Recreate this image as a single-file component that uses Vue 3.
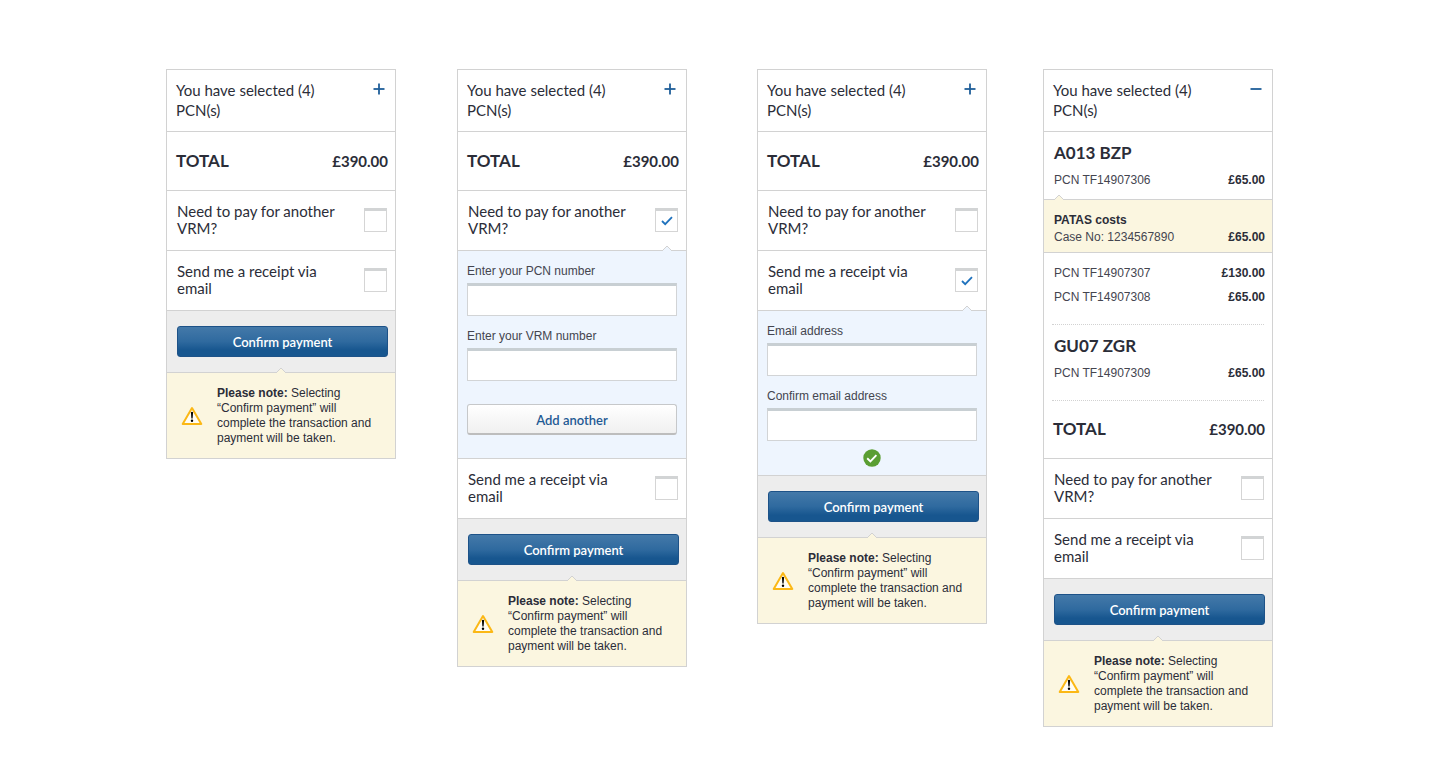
<template>
  <main class="page">
    <article class="card" v-for="card in cards" :key="card.id">
      <header class="summary">
        <h1 class="summary-title">You have selected (4) PCN(s)</h1>
        <button
          class="toggle"
          type="button"
          :aria-expanded="card.expanded"
          :aria-label="card.expanded ? 'Hide PCNs' : 'Show PCNs'"
          @click="card.expanded = !card.expanded"
        >
          <svg viewBox="0 0 12 12" width="12" height="12">
            <path d="M0.5 6H11.5" />
            <path d="M6 0.5V11.5" v-if="!card.expanded" />
          </svg>
        </button>
      </header>

      <div class="details" v-if="card.expanded">
        <section class="vehicle" v-for="vehicle in vehicles" :key="vehicle.vrm">
          <h2 class="vrm">{{ vehicle.vrm }}</h2>
          <table class="pcns">
            <tbody>
              <tr v-for="row in vehicle.rows" :key="row.ref" :class="{ patas: row.title }">
                <th scope="row">
                  <svg class="pointer pointer-left" viewBox="0 0 12 6" v-if="row.title">
                    <path d="M1 6L6 1L11 6" />
                  </svg>
                  <strong v-if="row.title">{{ row.title }}</strong>
                  {{ row.ref }}
                </th>
                <td>{{ row.amount }}</td>
              </tr>
            </tbody>
          </table>
          <hr class="divider" />
        </section>
      </div>

      <div class="total" :class="{ 'total-joined': card.expanded }">
        <span class="total-label">TOTAL</span>
        <span class="total-amount">£390.00</span>
      </div>

      <div class="option">
        <label :for="card.id + '-another'">Need to pay for another VRM?</label>
        <input :id="card.id + '-another'" class="check" type="checkbox" v-model="card.another" />
      </div>
      <form class="panel" v-if="card.another" @submit.prevent>
        <svg class="pointer pointer-right" viewBox="0 0 12 6"><path d="M1 6L6 1L11 6" /></svg>
        <label :for="card.id + '-pcn'">Enter your PCN number</label>
        <input :id="card.id + '-pcn'" class="field" type="text" />
        <label :for="card.id + '-vrm'">Enter your VRM number</label>
        <input :id="card.id + '-vrm'" class="field" type="text" />
        <button class="button button-light" type="button">Add another</button>
      </form>

      <div class="option">
        <label :for="card.id + '-receipt'">Send me a receipt via email</label>
        <input :id="card.id + '-receipt'" class="check" type="checkbox" v-model="card.receipt" />
      </div>
      <form class="panel panel-email" v-if="card.receipt" @submit.prevent>
        <svg class="pointer pointer-right" viewBox="0 0 12 6"><path d="M1 6L6 1L11 6" /></svg>
        <label :for="card.id + '-email'">Email address</label>
        <input :id="card.id + '-email'" class="field" type="email" />
        <label :for="card.id + '-email2'">Confirm email address</label>
        <input :id="card.id + '-email2'" class="field" type="email" />
        <svg class="valid" viewBox="0 0 18 18" width="18" height="18">
          <circle cx="9" cy="9" r="8.7" fill="#5a9e32" />
          <path d="M4.2 9.3L7.4 12.4L13.4 6.2" fill="none" stroke="#fff" stroke-width="1.9" />
        </svg>
      </form>

      <div class="action">
        <button class="button button-primary" type="button">Confirm payment</button>
      </div>

      <div class="note">
        <svg class="pointer pointer-center" viewBox="0 0 12 6"><path d="M1 6L6 1L11 6" /></svg>
        <svg class="warning" viewBox="0 0 22 20" width="22" height="20">
          <path class="warning-frame" d="M11 2L20.3 18H1.7Z" />
          <path d="M9.9 6.2Q11 5.4 12.1 6.2L11.6 12.6H10.4Z" />
          <circle cx="11" cy="14.8" r="1.2" />
        </svg>
        <p><strong>Please note:</strong> Selecting “Confirm payment” will complete the transaction and payment will be taken.</p>
      </div>
    </article>
  </main>
</template>

<script setup>
import { ref } from 'vue'

const cards = ref([
  { id: 'basket', expanded: false, another: false, receipt: false },
  { id: 'vrm', expanded: false, another: true, receipt: false },
  { id: 'email', expanded: false, another: false, receipt: true },
  { id: 'open', expanded: true, another: false, receipt: false }
])

const vehicles = [
  {
    vrm: 'A013 BZP',
    rows: [
      { ref: 'PCN TF14907306', amount: '£65.00' },
      { title: 'PATAS costs', ref: 'Case No: 1234567890', amount: '£65.00' },
      { ref: 'PCN TF14907307', amount: '£130.00' },
      { ref: 'PCN TF14907308', amount: '£65.00' }
    ]
  },
  {
    vrm: 'GU07 ZGR',
    rows: [{ ref: 'PCN TF14907309', amount: '£65.00' }]
  }
]
</script>

<style>
body {
  margin: 0;
  background: #fff;
}
</style>

<style scoped>
.page {
  display: grid;
  grid-template-columns: 230fr 61fr 230fr 70fr 230fr 56fr 230fr;
  align-items: start;
  padding: 69px 167px 38px 166px;
  color: #2b2d38;
  font-family: Lato, 'Noto Sans', sans-serif;
  font-size: 15px;
}

/* empty tracks between the cards */
.card:nth-child(1) {
  grid-column: 1;
}

.card:nth-child(2) {
  grid-column: 3;
}

.card:nth-child(3) {
  grid-column: 5;
}

.card:nth-child(4) {
  grid-column: 7;
}

.card {
  border: 1px solid #d2d2d2;
  background: #fff;
}

.summary {
  display: flex;
  justify-content: space-between;
  align-items: flex-start;
  padding: 10px 10px 11px 9px;
}

.summary-title {
  margin: 0;
  max-width: 160px;
  font-size: 15px;
  font-weight: 400;
  line-height: 20px;
}

.toggle {
  padding: 3px 0;
  border: 0;
  background: none;
  cursor: pointer;
  line-height: 0;
}

.toggle path {
  fill: none;
  stroke: #1f5e99;
  stroke-width: 1.8;
}

.vrm {
  margin: 0 10px 3px;
  font-size: 17px;
  font-weight: 700;
  line-height: 24px;
}

.details {
  border-top: 1px solid #d2d2d2;
}

.vehicle {
  padding-top: 9px;
}

.pcns {
  width: 100%;
  border-collapse: separate;
  border-spacing: 0;
  font-family: 'Liberation Sans', Arial, sans-serif;
  font-size: 12px;
}

.pcns th,
.pcns td {
  padding: 0 7px 0 10px;
  line-height: 24px;
  vertical-align: bottom;
}

.pcns th {
  color: #44454f;
  font-weight: 400;
  text-align: left;
}

.pcns td {
  font-weight: 700;
  text-align: right;
}

.pcns .patas th,
.pcns .patas td {
  padding-top: 12px;
  padding-bottom: 6px;
  border: solid #d2d2d2;
  border-width: 1px 0;
  background: #fbf6e0;
  line-height: 17px;
}

.patas th {
  position: relative;
}

.patas strong {
  display: block;
  color: #2b2d38;
}

/* room above and below the highlighted row */
.pcns tr:has(+ .patas) > * {
  padding-bottom: 7px;
}

.pcns .patas + tr > * {
  padding-top: 8px;
}

.divider {
  margin: 15px 8px 0;
  border: 0;
  border-top: 1px dotted #d2d2d2;
}

.total {
  display: flex;
  justify-content: space-between;
  align-items: center;
  padding: 17px 7px 17px 9px;
  border-top: 1px solid #d2d2d2;
  font-weight: 700;
  line-height: 24px;
}

.total-joined {
  padding-top: 16px;
  border-top: 0;
}

.total-label {
  font-size: 17px;
}

.option {
  display: flex;
  justify-content: space-between;
  align-items: center;
  padding: 12px 8px 13px 10px;
  border-top: 1px solid #d2d2d2;
}

.option label {
  max-width: 170px;
  line-height: 17px;
}

.check {
  appearance: none;
  width: 23px;
  height: 24px;
  margin: 0;
  border: 1px solid #d5d5d5;
  border-top: 3px solid #d2d4d5;
  background: #fff;
  cursor: pointer;
}

.check:checked {
  background: #fff url("data:image/svg+xml,%3Csvg xmlns='http://www.w3.org/2000/svg' width='12' height='10'%3E%3Cpath d='M1 5L4.2 8.2L11 1.2' fill='none' stroke='%231f72bd' stroke-width='1.8'/%3E%3C/svg%3E") no-repeat center;
}

.panel {
  position: relative;
  display: flex;
  flex-direction: column;
  padding: 12px 9px 23px;
  border-top: 1px solid #d2d2d2;
  background: #eef5fe;
  color: #44454f;
  font-family: 'Liberation Sans', Arial, sans-serif;
  font-size: 12px;
}

.panel-email {
  padding-bottom: 8px;
}

.panel label {
  margin-bottom: 4px;
  line-height: 16px;
}

.field {
  box-sizing: border-box;
  width: 100%;
  height: 33px;
  margin: 0 0 12px;
  padding: 0 8px;
  border: 1px solid #d2d4d6;
  border-top: 3px solid #c8cfd3;
  border-radius: 0;
  background: #fff;
  font: inherit;
}

.valid {
  align-self: center;
  margin-top: -4px;
}

.button {
  box-sizing: border-box;
  width: 100%;
  height: 31px;
  padding: 0;
  border-radius: 3px;
  cursor: pointer;
  font-family: Lato, 'Noto Sans', sans-serif;
  font-size: 13px;
  font-weight: 600;
}

.button-light {
  margin-top: 11px;
  padding-top: 1px;
  border: 1px solid #c6c8ca;
  border-bottom: 2px solid #bdbdbd;
  background: linear-gradient(#fff, #f0f0f0);
  color: #1f5a94;
}

.button-primary {
  border: 1px solid #1d5288;
  background: linear-gradient(#4479a9, #2f6a9f 50%, #17568f 80%, #17568f);
  color: #fff;
}

.action {
  padding: 15px 7px 15px 10px;
  border-top: 1px solid #d2d2d2;
  background: #ededed;
}

.note {
  position: relative;
  display: flex;
  align-items: center;
  gap: 14px;
  padding: 13px 14px 12px;
  border-top: 1px solid #d2d2d2;
  background: #fbf6e0;
  font-family: 'Liberation Sans', Arial, sans-serif;
  font-size: 12px;
  line-height: 15px;
}

.note p {
  margin: 0;
}

.warning {
  flex: none;
}

.warning-frame {
  fill: #fffdf5;
  stroke: #fbb816;
  stroke-width: 2;
  stroke-linejoin: round;
}

.pointer {
  position: absolute;
  top: -6px;
  width: 12px;
  height: 6px;
  fill: #fbf6e0;
  stroke: #d2d2d2;
}

.pointer-left {
  left: 9px;
}

.pointer-center {
  left: calc(50% - 6px);
}

.pointer-right {
  right: 13px;
  fill: #eef5fe;
}
</style>
